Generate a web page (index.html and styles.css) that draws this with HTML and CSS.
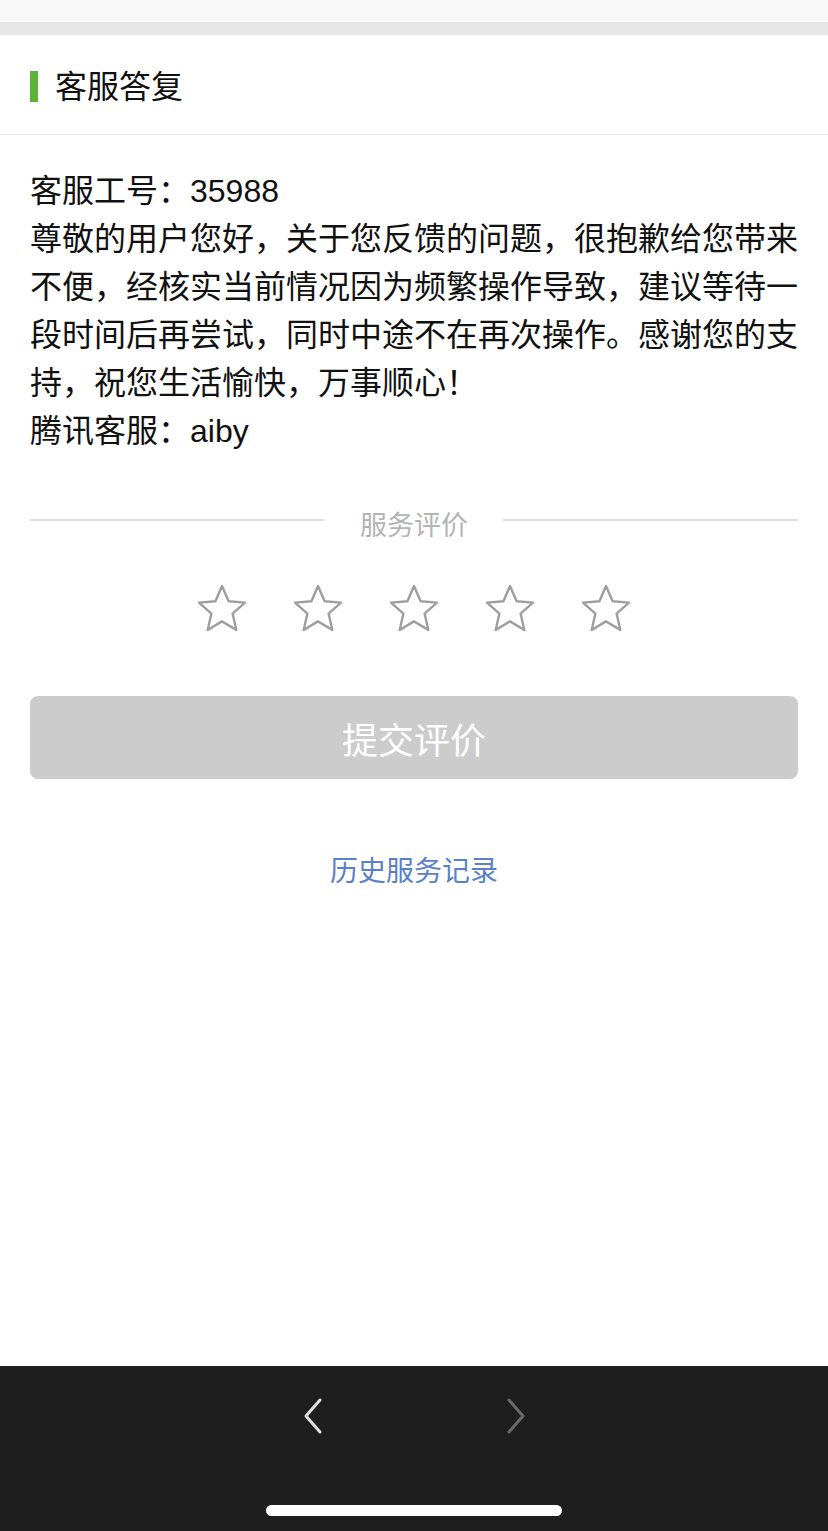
FILE: index.html
```html
<!DOCTYPE html>
<html lang="zh-CN">
<head>
    <meta charset="utf-8">
    <title>客服答复</title>
    <link rel="stylesheet" href="styles.css">
</head>
<body>
    <div class="page">
        <div class="topstrip"></div>
        <div class="gapbar"></div>

        <div class="head">
            <span class="mark"></span>
            <h2>客服答复</h2>
        </div>

        <div class="reply">
            <p>客服工号：35988</p>
            <p>尊敬的用户您好，关于您反馈的问题，很抱歉给您带来不便，经核实当前情况因为频繁操作导致，建议等待一段时间后再尝试，同时中途不在再次操作。感谢您的支持，祝您生活愉快，万事顺心！</p>
            <p>腾讯客服：aiby</p>
        </div>

        <div class="rate_title">
            <span class="line"></span>
            <span class="rate_txt">服务评价</span>
            <span class="line"></span>
        </div>

        <div class="stars">
            <svg class="star" viewBox="0 0 50 48"><polygon points="25,2 31.6,17.3 48,18.6 35.6,29.6 39.3,46 25,37.4 10.7,46 14.4,29.6 2,18.6 18.4,17.3"/></svg>
            <svg class="star" viewBox="0 0 50 48"><polygon points="25,2 31.6,17.3 48,18.6 35.6,29.6 39.3,46 25,37.4 10.7,46 14.4,29.6 2,18.6 18.4,17.3"/></svg>
            <svg class="star" viewBox="0 0 50 48"><polygon points="25,2 31.6,17.3 48,18.6 35.6,29.6 39.3,46 25,37.4 10.7,46 14.4,29.6 2,18.6 18.4,17.3"/></svg>
            <svg class="star" viewBox="0 0 50 48"><polygon points="25,2 31.6,17.3 48,18.6 35.6,29.6 39.3,46 25,37.4 10.7,46 14.4,29.6 2,18.6 18.4,17.3"/></svg>
            <svg class="star" viewBox="0 0 50 48"><polygon points="25,2 31.6,17.3 48,18.6 35.6,29.6 39.3,46 25,37.4 10.7,46 14.4,29.6 2,18.6 18.4,17.3"/></svg>
        </div>

        <button class="submit" type="button">提交评价</button>

        <a class="history" href="#">历史服务记录</a>
    </div>

    <div class="toolbar">
        <div class="navs">
            <svg class="nav" viewBox="0 0 20 36"><polyline points="17,2 3,18 17,34"/></svg>
            <svg class="nav off" viewBox="0 0 20 36"><polyline points="3,2 17,18 3,34"/></svg>
        </div>
        <div class="homebar"></div>
    </div>
</body>
</html>
```

FILE: styles.css
```css
*{
    margin: 0;
    padding: 0;
    box-sizing: border-box;
}
body{
    width: 828px;
    height: 1531px;
    display: flex;
    flex-direction: column;
    background-color: #fff;
    font-family: "Liberation Sans", "Noto Sans CJK SC", sans-serif;
    color: #111;
}
.page{
    flex: 1;
    display: flex;
    flex-direction: column;
}
.topstrip{
    height: 22px;
    background-color: #f8f8f8;
}
.gapbar{
    height: 13px;
    background-color: #e7e7e7;
}
.head{
    height: 100px;
    display: flex;
    align-items: center;
    padding-left: 30px;
    border-bottom: 1px solid #e8e8e8;
}
.mark{
    width: 8px;
    height: 31px;
    background-color: #5cb33a;
    margin-right: 17px;
    margin-top: 3px;
}
.head h2{
    font-size: 32px;
    font-weight: 400;
    line-height: 40px;
    margin-top: 4px;
}
.reply{
    padding: 32px 30px 0 30px;
    font-size: 32px;
    line-height: 48px;
}
.rate_title{
    display: flex;
    align-items: center;
    margin: 48px 30px 0 30px;
    height: 40px;
}
.line{
    flex: 1;
    height: 2px;
    background-color: #e2e2e2;
    margin-top: -6px;
}
.rate_txt{
    margin: 0 35px;
    font-size: 27px;
    color: #b4b4b4;
}
.stars{
    display: flex;
    justify-content: center;
    gap: 46px;
    margin-top: 41px;
}
.star{
    width: 50px;
    height: 48px;
}
.star polygon{
    fill: none;
    stroke: #9e9e9e;
    stroke-width: 2.4;
    stroke-linejoin: round;
}
.submit{
    margin: 64px 30px 0 30px;
    height: 83px;
    border: none;
    border-radius: 8px;
    background-color: #cccccc;
    color: #fff;
    font-family: inherit;
    font-size: 36px;
}
.history{
    align-self: center;
    margin-top: 73px;
    font-size: 28px;
    line-height: 40px;
    color: #5b7fc8;
    text-decoration: none;
}
.toolbar{
    height: 165px;
    background-color: #1e1e1e;
    display: flex;
    flex-direction: column;
    align-items: center;
}
.navs{
    display: flex;
    gap: 183px;
    margin-top: 32px;
}
.nav{
    width: 20px;
    height: 36px;
}
.nav polyline{
    fill: none;
    stroke: #e0e0e0;
    stroke-width: 3;
    stroke-linecap: round;
    stroke-linejoin: round;
}
.nav.off polyline{
    stroke: #6a6a6a;
}
.homebar{
    width: 296px;
    height: 11px;
    border-radius: 6px;
    background-color: #fff;
    margin-top: 71px;
}
```
